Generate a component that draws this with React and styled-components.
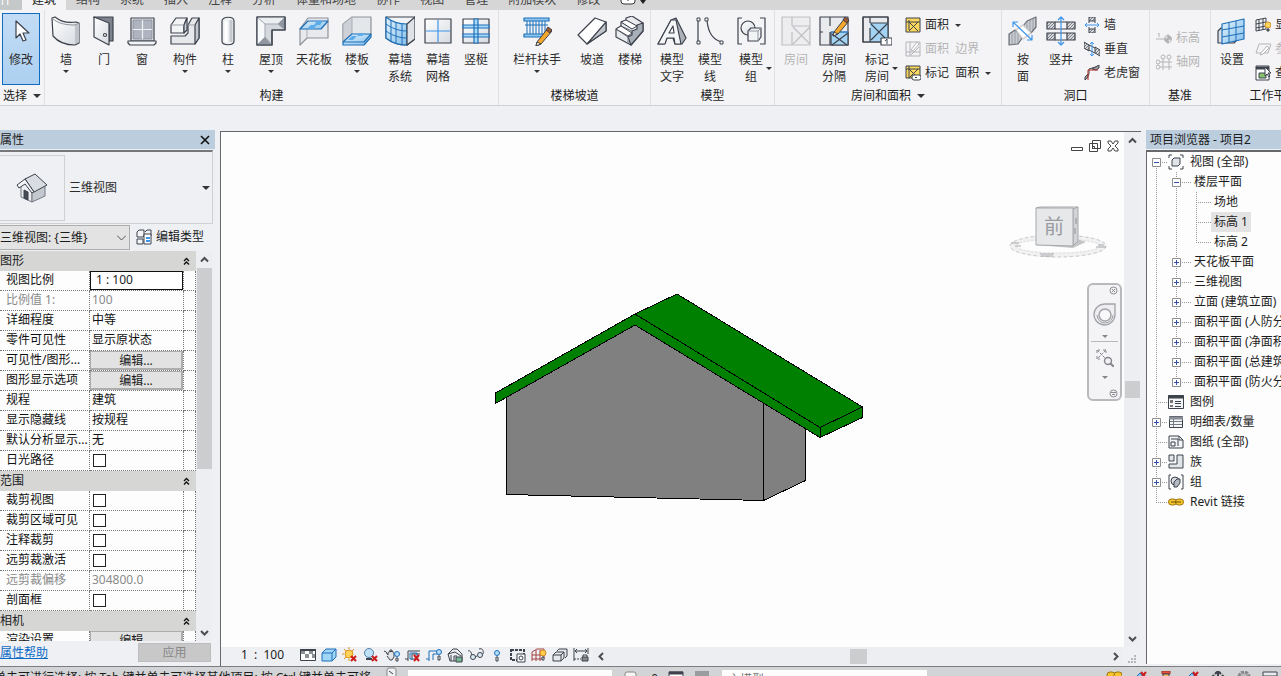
import React from "react";
import styled, { createGlobalStyle, css } from "styled-components";

const ink = "#3d424c";
const blue = "#1d6fb8";
const sky = "#3d95ea";

const GlobalStyle = createGlobalStyle`
  *, *::before, *::after { box-sizing: border-box; }
  body { margin: 0; overflow: hidden; }
  body, button, input, select, table {
    font-family: "Noto Sans", "Noto Sans CJK SC", sans-serif;
    font-size: 12px;
    line-height: 16px;
    color: #1c1c1c;
  }
  button, input, select { padding: 0; margin: 0; border: 0; background: none; }
  svg { display: block; flex: none; }
`;

/* ---------- shell ---------- */

const Shell = styled.div`
  display: flex;
  flex-direction: column;
  height: 100vh;
  overflow: hidden;
  background: #eef0f4;
`;

const TabBar = styled.nav`
  display: flex;
  align-items: flex-end;
  flex: none;
  height: 10px;
  overflow: hidden;
  background: #d6d6d6;
`;

const Tab = styled.button`
  flex: none;
  height: 18px;
  padding: 0 10px 2px;
  white-space: nowrap;
  color: #444;
  ${(p) => p.$file && css`padding-left: 0; width: 22px; direction: rtl; background: #c4c8c8; color: #fff;`}
  ${(p) => p.$active && css`background: #f4f4f6; color: #222;`}
`;

const Ribbon = styled.div`
  display: flex;
  flex: none;
  height: 96px;
  overflow: hidden;
  background: #f4f4f7;
  border-bottom: 1px solid #d0d0d2;
`;

const RibbonGroup = styled.section`
  display: flex;
  flex-direction: column;
  flex: none;
  width: ${(p) => p.$width}px;
  border-right: 1px solid #dfe0e0;
`;

const GroupTools = styled.div`
  display: flex;
  height: 77px;
  padding: 3px 2px 0;
`;

const GroupTitle = styled.div`
  display: flex;
  align-items: center;
  justify-content: center;
  gap: 6px;
  height: 18px;
  white-space: nowrap;
`;

const Tool = styled.button`
  display: flex;
  flex-direction: column;
  align-items: center;
  flex: none;
  width: ${(p) => p.$width || 38}px;
  height: 72px;
  padding-top: 3px;
  line-height: 17px;
  white-space: nowrap;
  color: #2c2c2c;
  ${(p) => p.disabled && css`color: #b4b4b4;`}
  ${(p) => p.$active && css`
    padding-top: 2px;
    border: 1px solid #0f6cc0;
    background: linear-gradient(#c3dcf5, #acd0f0);
  `}
`;

const ToolLabel = styled.span`
  display: grid;
  grid-template-columns: 1fr auto 1fr;
  align-items: center;
  width: 100%;
  margin-top: 5px;
  & > span { grid-column: 2; text-align: center; }
  & > i { margin-left: 3px; }
  & + i { margin-top: 2px; }
`;

const Caret = styled.i`
  width: 0;
  height: 0;
  border: ${(p) => (p.$big ? 4 : 3)}px solid transparent;
  border-top-color: #333;
  border-bottom-width: 0;
`;

const SmallColumn = styled.div`
  display: flex;
  flex-direction: column;
  flex: none;
  justify-content: ${(p) => (p.$center ? "center" : "flex-start")};
  padding-left: 4px;
`;

const SmallTool = styled.button`
  display: flex;
  align-items: center;
  gap: 4px;
  height: 24px;
  white-space: pre;
  color: ${(p) => (p.disabled ? "#b4b4b4" : "#2c2c2c")};
  & > i { margin-left: 2px; }
`;

const Workspace = styled.main`
  display: grid;
  grid-template-columns: 215px minmax(0, 1fr) 135px;
  column-gap: 5px;
  flex: 1;
  min-height: 0;
  margin-top: 24px;
`;

/* ---------- properties ---------- */

const Panel = styled.section`
  display: flex;
  flex-direction: column;
  min-width: 0;
  min-height: 0;
  overflow: hidden;
`;

const PanelTitle = styled.h2`
  display: flex;
  align-items: center;
  justify-content: space-between;
  flex: none;
  height: 19px;
  margin: 0 0 1px;
  padding: 0 5px 0 ${(p) => p.$inset || 0}px;
  font-size: 12px;
  font-weight: 400;
  white-space: nowrap;
  background: #bccddd;
`;

const TypeSelector = styled.button`
  display: flex;
  align-items: center;
  flex: none;
  height: 74px;
  margin-right: 2px;
  padding: 3px 2px 2px 0;
  border: solid #cfd0d2;
  border-width: 0 1px 1px 0;
  border-top: 2px solid #75777a;
  text-align: left;
  color: #2c2c2c;
`;

const Thumb = styled.span`
  display: flex;
  align-items: center;
  justify-content: center;
  width: 65px;
  height: 66px;
  margin-right: 4px;
  border: 1px solid #cfd0d2;
  border-left: 0;
`;

const Grow = styled.span`
  flex: 1;
`;

const InstanceRow = styled.div`
  display: flex;
  align-items: center;
  gap: 6px;
  flex: none;
  height: 27px;
`;

const SelectBox = styled.div`
  display: grid;
  align-items: center;
  & > * { grid-area: 1 / 1; }
  & > svg { justify-self: end; margin-right: 4px; pointer-events: none; }
`;

const InstanceSelect = styled.select`
  appearance: none;
  width: 130px;
  height: 25px;
  border: 1px solid #adadad;
  border-left: 0;
  border-radius: 0;
  background: #e3e3e3;
`;

const EditType = styled.button`
  display: flex;
  align-items: center;
  gap: 4px;
  padding-bottom: 2px;
  white-space: nowrap;
`;

const PropertyArea = styled.div`
  display: flex;
  flex: 1;
  min-height: 0;
  overflow: hidden;
`;

const PropertyTable = styled.table`
  align-self: flex-start;
  width: 196px;
  table-layout: fixed;
  border-collapse: separate;
  border-spacing: 0;
  background: #fdfdfd;
`;

const SectionHead = styled.th`
  height: 20px;
  padding: 0;
  font-weight: 400;
  text-align: left;
  background: #d6d7d5;
  & > div { display: flex; justify-content: space-between; padding-right: 6px; }
`;

const cell = css`
  height: 20px;
  padding: 0 0 1px;
  overflow: hidden;
  font-weight: 400;
  text-align: left;
  white-space: nowrap;
  border-right: 1px dotted #777;
  border-bottom: 1px dotted #777;
  color: ${(p) => (p.$dim ? "#8b8b8b" : "#111")};
`;

const NameCell = styled.th`
  ${cell}
  padding-left: 6px;
`;

const ValueCell = styled.td`
  ${cell}
  ${(p) => (p.$flush ? css`padding: 0;` : css`padding-left: 2px;`)}
  & > * { display: block; }
`;

const ScaleInput = styled.input`
  width: 100%;
  height: 19px;
  padding: 0 0 2px 5px;
  border: 1px solid #111;
  background: #fff;
`;

const EditButton = styled.button`
  width: 100%;
  height: 19px;
  padding-top: 1px;
  border: 1px solid #adadad;
  border-right-width: 2px;
  border-bottom-width: 2px;
  line-height: 15px;
  background: #e2e2e2;
`;

const CheckBox = styled.input`
  appearance: none;
  width: 13px;
  height: 13px;
  margin: 1px 0 0 1px;
  border: 1px solid #222;
  background: #fff;
`;

const PanelFooter = styled.footer`
  display: flex;
  align-items: flex-start;
  justify-content: space-between;
  flex: none;
  height: 25px;
  padding: 2px 4px 0 0;
`;

const HelpLink = styled.a`
  margin-top: 2px;
  line-height: 16px;
  color: #0b6bc7;
`;

const ApplyButton = styled.button`
  width: 73px;
  height: 19px;
  border: 1px solid #bdbdbd;
  background: #c8c8c9;
  color: #878787;
`;

/* ---------- scrollbars ---------- */

const Scroll = styled.div`
  display: flex;
  flex-direction: ${(p) => (p.$across ? "row" : "column")};
  align-items: center;
  background: #eceef2;
  ${(p) => (p.$across ? css`flex: 1; height: 18px;` : css`flex: none; width: 16px;`)}
`;

const ScrollArrow = styled.button`
  display: flex;
  align-items: center;
  justify-content: center;
  flex: none;
  width: 16px;
  height: 17px;
`;

const ScrollThumb = styled.span`
  flex: none;
  width: ${(p) => (p.$across ? p.$size : 15)}px;
  height: ${(p) => (p.$across ? 15 : p.$size)}px;
  background: #cccdce;
`;

const Space = styled.span`
  flex: ${(p) => p.$share} 1 0;
`;

/* ---------- drawing view ---------- */

const ViewPane = styled.section`
  display: flex;
  flex-direction: column;
  min-width: 0;
  min-height: 0;
  margin-top: 1px;
  border: solid #66686c;
  border-width: 1px 0 0 1px;
`;

const ViewBody = styled.div`
  display: flex;
  flex: 1;
  min-height: 0;
  padding-right: 1px;
`;

const Canvas = styled.div`
  position: relative;
  flex: 1;
  overflow: hidden;
  background: #fdfdfd;
`;

const ModelDrawing = styled.svg`
  position: absolute;
  left: 273px;
  top: 160px;
`;

const ViewCube = styled.svg`
  position: absolute;
  right: 15px;
  top: 72px;
`;

const WindowButtons = styled.div`
  position: absolute;
  right: 5px;
  top: 8px;
  display: flex;
  gap: 6px;
`;

const NavBar = styled.div`
  position: absolute;
  right: 2px;
  top: 151px;
  display: flex;
  flex-direction: column;
  align-items: center;
  width: 35px;
  height: 118px;
  padding: 1px 2px;
  border: 2px solid #b9b9bd;
  border-radius: 6px;
  background: #f4f4f6;
  & > button:first-child, & > button:last-child { align-self: flex-end; }
`;

const NavButton = styled.button`
  display: flex;
  flex-direction: column;
  align-items: center;
  justify-content: space-between;
  height: ${(p) => p.$height}px;
  & > i { border-top-color: #85858a; }
`;

const NavRule = styled.hr`
  width: 27px;
  margin: 3px 0 7px;
  border: 0;
  border-top: 1px solid #b9b9bd;
`;

const ViewControls = styled.div`
  display: flex;
  align-items: flex-start;
  flex: none;
  height: 19px;
`;

const ScaleButton = styled.button`
  width: 79px;
  padding-left: 4px;
  white-space: pre;
`;

const ControlIcons = styled.div`
  display: flex;
  gap: 5px;
  margin-right: 4px;
`;

const IconButton = styled.button`
  display: block;
`;

/* ---------- project browser ---------- */

const Tree = styled.ul`
  flex: 1;
  min-height: 0;
  margin: 0 0 2px;
  padding: 0 0 0 1px;
  overflow: hidden;
  list-style: none;
  border: solid #66686c;
  border-width: 2px 0 0 1px;
  background: #fdfdfd;
`;

const TreeRow = styled.li`
  display: flex;
  align-items: center;
  height: 20px;
  white-space: nowrap;
`;

const dots = (dir) => `repeating-linear-gradient(${dir}, #999 0 1px, transparent 1px 2px)`;

const Guide = styled.span`
  display: flex;
  align-items: center;
  flex: none;
  width: ${(p) => (p.$wide ? 23 : 20)}px;
  height: 20px;
  padding-left: 4px;
  background-repeat: no-repeat;
  background-image: ${dots("to bottom")}, ${dots("to right")};
  background-position: 8px ${(p) => (p.$line === "start" ? 10 : 0)}px, 8px 10px;
  background-size:
    1px ${(p) => (p.$line === "end" || p.$line === "start" ? 10 : 20)}px,
    ${(p) => (p.$branch ? 20 : 0)}px 1px;
`;

const Toggle = styled.button`
  display: block;
  width: 9px;
  height: 9px;
  background: #fff;
`;

const TreeLabel = styled.span`
  padding: 2px 3px;
  background: ${(p) => (p.$selected ? "#e3e3e3" : "none")};
  ${(p) => p.$iconic && css`margin-left: 3px;`}
`;

/* ---------- status ---------- */

const StatusBar = styled.footer`
  display: flex;
  align-items: flex-start;
  flex: none;
  height: 10px;
  overflow: hidden;
  border-top: 1px solid #7b7d80;
  background: #d3d4d6;
`;

const StatusText = styled.span`
  flex: none;
  width: 386px;
  margin-top: 3px;
  overflow: hidden;
  white-space: nowrap;
  text-indent: -6px;
`;

const StatusField = styled.input`
  flex: none;
  width: 204px;
  height: 20px;
  margin: 3px 10px 0 6px;
  background: #fdfdfd;
`;

const StatusSelect = styled.select`
  appearance: none;
  flex: none;
  width: 205px;
  height: 20px;
  margin: 3px 0 0 9px;
  padding-left: 6px;
  border-radius: 0;
  background: #fdfdfd;
  color: #777;
`;

const StatusIcons = styled.div`
  display: flex;
  gap: 10px;
  margin: 4px 3px 0 0;
`;

/* ---------- icons ---------- */

const Defs = () => (
  <svg width="0" height="0" style={{ position: "absolute" }} aria-hidden="true">
    <defs>
      <linearGradient id="steel" x1="0" y1="0" x2="1" y2="1">
        <stop offset="0" stopColor="#ffffff" />
        <stop offset="1" stopColor="#d6dae0" />
      </linearGradient>
      <linearGradient id="glass" x1="0" y1="0" x2="1" y2="1">
        <stop offset="0" stopColor="#e4f3ff" />
        <stop offset="1" stopColor="#84bfea" />
      </linearGradient>
      <pattern id="hatch" width="3" height="3" patternUnits="userSpaceOnUse">
        <rect width="3" height="3" fill="#d8dadd" />
        <path d="M0 3 3 0" stroke="#7b8088" strokeWidth="1" />
      </pattern>
      <pattern id="stripe" width="3" height="3" patternUnits="userSpaceOnUse">
        <rect width="3" height="3" fill="#c9ccd1" />
        <path d="M1 0v3" stroke="#9a9ea6" strokeWidth="1" />
      </pattern>
    </defs>
  </svg>
);

const Big = ({ children }) => (
  <svg width="30" height="30" viewBox="0 0 30 30" fill="none" stroke={ink} strokeWidth="1.2" strokeLinejoin="round">
    {children}
  </svg>
);

const Small = ({ children, size = 16 }) => (
  <svg width={size} height={size} viewBox="0 0 16 16" fill="none" stroke={ink} strokeWidth="1">
    {children}
  </svg>
);

const Pencil = () => (
  <g strokeWidth="1">
    <path d="M15 16 26 2 30 5 19 18 14 20Z" fill="#f5a72c" />
    <path d="M15 16 19 18 14 20Z" fill="#fff2cf" />
    <path d="m24 4 2-3 4 3-2 3Z" fill="#a4592b" />
  </g>
);

const art = {
  modify: <path d="M10 5v17l4-4 3 7 3-1-3-7h6Z" fill="#fff" />,
  wall: <><path d="m1 2 3-1c6 5 14 6 21 5l3 1v20l-4 2c-9 0-17-3-22-9Z" fill="url(#steel)" /><path d="M24 9v19l4-2V7Z" fill="#c0c4ca" stroke="none" /><path d="M1 2c6 6 15 7 23 7l4-2" stroke="#8b9099" strokeWidth="1" /></>,
  door: <><path d="M5 1h19v24h-4V8L5 2Z" fill="#7d838c" /><path d="m5 1 15 6v22L5 21Z" fill="url(#steel)" /><circle cx="16" cy="19" r="1.500" fill="#fff" /></>,
  window: <><path d="M4 2h23v23H4Z" fill="#eceef1" /><path d="M6 4h19v19H6Z" fill="#aeb3bf" stroke="#8b909c" strokeWidth="1" /><path d="M15.500 4v19M6 13.500h19" stroke="#f1f2f5" /><path d="M1 25h28v2l-2 2H3l-2-2Z" fill="#f4f5f7" /></>,
  component: <><path d="m1 9 5-7h11l-3 7v8H1Z" fill="#f3f4f6" /><path d="M14 9v8l3-3V2Z" fill="#cfd3d9" /><path d="M1 9h13" stroke="#9a9fa8" strokeWidth="1" /><path d="m18 9 4-7h7v20l-4 6H1v-8h14l3-3Z" fill="#e6e8ec" /><path d="m25 9 4-7v20l-4 6Z" fill="#c3c8cf" /><path d="M18 9h7" stroke="#9a9fa8" strokeWidth="1" /></>,
  column: <><path d="M9 5c0-5 12-5 12 0v20c0 5-12 5-12 0Z" fill="#eef0f2" /><path d="M13 5v21" stroke="#fff" strokeWidth="3" /><path d="M18 4v22" stroke="#c4c8ce" strokeWidth="3" /></>,
  roof: <><path d="M1 1h28v13H16v15H1Z" fill="#d5d8dd" /><path d="m1 1 8 7v13l-8 8Z" fill="#f7f8fa" stroke="none" /><path d="m1 29 8-8 7 8ZM29 1l-7 7 7 6Z" fill="#8f96a1" stroke="none" /><path d="M1 1h28l-7 7H9Z" fill="#eceef1" stroke="none" /><path d="m1 1 8 7h13l7-7M9 8v13l-8 8M9 21l7 8M22 8l7 6" stroke="#a2a7af" strokeWidth="1" /><path d="M1 1h28v13H16v15H1Z" /></>,
  ceiling: <><path d="M1 13 9 2h20v20H8l-7 7Z" fill="#e7e9ed" stroke="#8d9299" /><path d="M8 13v9" stroke="#b2b6bd" /><path d="m1 13 8-8h20l-7 8Z" fill="url(#glass)" stroke={blue} /><path d="M8 13l4-4h6l-4 4ZM15 9l3-4h6l-3 4Z" fill="#5cabe9" stroke="none" /></>,
  floor: <><path d="M1 8 10 1h19v17l-7 8H1Z" fill="#e4e7ea" stroke="#8d9299" /><path d="M1 8 10 1v17l-9 7Z" fill="#cdd1d6" stroke="#a9adb4" strokeWidth="1" /><path d="m1 26 9-8h19v3l-7 8H1Z" fill="url(#glass)" stroke={blue} /><path d="M1 26h21l7-8" stroke={blue} /><path d="m6 24 4-4h5l-4 4ZM15 20l3-3h5l-3 3Z" fill="#5cabe9" stroke="none" /></>,
  curtain: <><path d="M1 1h29v22l-8 6C14 29 7 27 1 22Z" fill="#f1f4f7" /><path d="M1 1c6 5 14 7 21 7v21C14 29 7 27 1 22Z" fill="url(#glass)" stroke={blue} /><path d="m22 8 8-7v22l-8 6Z" fill="#dfe2e6" /><path d="M1 8c7 5 14 7 21 7M1 15c7 5 14 7 21 7M6 4v21M11 6v21M17 8v20" stroke={blue} strokeWidth="1" /></>,
  grid: <><path d="M2 3h26v24H2Z" fill="url(#steel)" /><path d="M15 4v22M3 15h24" stroke={sky} /></>,
  mullion: <><path d="M2 3h26v24H2Z" fill="url(#steel)" /><path d="M2 9h26v3H2ZM2 18h26v3H2ZM13 3h4v24h-4Z" fill="#a8dafa" stroke={blue} /></>,
  railing: <><path d="M2 2h25v3H2ZM2 18h22v3H2Z" fill="#8cc6f2" stroke={blue} /><path d="M5 5v13M8 5v13M11 5v13M14 5v13M17 5v13M20 5v13M23 5v13M3 9h23" stroke={blue} strokeWidth="1" /><g transform="translate(0 10)"><Pencil /></g></>,
  ramp: <><path d="m1 19 17-17 11 4v9L10 28Z" fill="#fff" /><path d="M29 6v9L10 28Z" fill="#c0c5cc" /></>,
  stair: <><path d="m1 13 5-3V6l5-2V2l6-2 11 7v8L16 29 1 21Z" fill="#e9ebee" /><path d="m16 29-3-8 4-2v-4l5-2v-4l6-2v8Z" fill="#a9afb9" /><path d="m1 13 12 8v6M6 10l11 5M6 6l11 7M11 4l11 7M1 13l5-3" strokeWidth="1" stroke="#747a84" /><path d="m1 13 5-3 11 7-4 3ZM6 6l5-2 11 6-5 3Z" fill="#fff" strokeWidth="1" /></>,
  mtext: <><path d="m1 28 13-24 5-2 10 20-4 6h-7l-2-6h-6l-3 6Z" fill="#adb2ba" /><path d="m1 28 13-24h5l5 24h-6l-1-6h-7l-2 6Z" fill="#f4f5f6" /><path d="M12 17h5l-1-7Z" fill="#fff" /></>,
  mline: <><path d="M3 4v22M12 4c1 13 6 20 15 22" /><path d="M2 2h3v3H2ZM2 25h3v3H2ZM10 2h3v3h-3ZM25 25h3v3h-3Z" fill="#fff" strokeWidth="1" /></>,
  mgroup: <><path d="M6 2H2v26h4M24 2h5v26h-5" /><circle cx="12" cy="12" r="7" fill="url(#steel)" /><path d="m12 15 3-3h10v9l-3 4H12Z" fill="#f2f3f5" /><path d="M12 15h10v10M22 15l3-3" stroke="#9297a0" strokeWidth="1" /></>,
  room: <g stroke="#bfc0c3"><path d="M1 1h28v28H1Z" fill="#ededf0" /><path d="M11 1v9M11 16v13M11 10h18M12 11l17 17M29 11 12 28" /></g>,
  separator: <><path d="M1 1h28v28H1Z" fill="#e8eaed" /><path d="M12 16h17v13H12Z" fill="#a4d4f3" /><path d="M11 1v9M11 16v13M1 16h3M13 29l16-12M13 18l15 11" /><path d="M12 16h17" stroke={sky} /><Pencil /></>,
  tagroom: <><path d="M1 1h25v25H1Z" fill="#e8eaed" /><path d="M8 7h18v18H8Z" fill="#a4d4f3" stroke="none" /><path d="M8 1v6M8 12v14M8 7h18M9 8l16 16M25 8 9 24M1 1h25v25H1Z" /><path d="M19 22h11v7H19Z" fill="#fff" /><path d="M25 23v5M23 25l2-2" strokeWidth="1" /></>,
  byface: <><path d="M19 5 28 1v10l-5 6-8-7ZM1 29V18l6-4 8 7-5 7Z" fill="url(#stripe)" stroke="#6c7179" /><path d="m8 14 7-5 8 8-8 6Z" fill="#fff" stroke="#ccc" /><path d="m5 6 19 18M5 11V6h5M24 19v5h-5" stroke={sky} /></>,
  shaft: <><path d="M1 6h8v7H1ZM21 6h8v7h-8ZM1 17h8v7H1ZM21 17h8v7h-8Z" fill="url(#hatch)" /><path d="M9 6h12M9 13h12M9 17h12M9 24h12" strokeWidth="1" /><path d="M15 1v28M12 4l3-3 3 3M12 26l3 3 3-3" stroke={sky} /></>,
  setplane: <><path d="M1 15 4 12h14c4 0 4 3 4 6v4l-5 5H1Z" fill="#dce1e6" /><path d="m5 8 22-5v20L5 28Z" fill="url(#glass)" stroke={blue} /><path d="M12 6v20M19 5v20M5 14l22-4M5 21l22-4" stroke={blue} strokeWidth="1" /></>,
};

const smallArt = {
  area: <><path d="M1 1h14v14H1Z" fill="#fbd85d" /><path d="M4 3v10M1 5h14M4 5l9 9M13 5l-9 9" /></>,
  boundary: <g stroke="#b5b5b8"><path d="M1 1h14v14H1ZM5 1v14M1 11h14M6 14l8-8" /><path d="m6 9 6-8 2 2-6 7Z" fill="#fff" /></g>,
  tagarea: <><path d="M1 1h14v12H1Z" fill="#fbd85d" /><path d="M4 1v12M1 4h14M4 4l9 9M13 4l-9 9" /><rect x="7" y="10" width="9" height="5" rx="2" fill="#fff" /><path d="M10 12.500h2" /></>,
  owall: <><path d="M5 0h6v4H5ZM5 12h6v4H5Z" fill="url(#hatch)" /><path d="M5 4v2M11 4v2M5 12v-2M11 12v-2" /><path d="M1 8h14M3 6 1 8l2 2M13 6l2 2-2 2" stroke={sky} /></>,
  vertical: <><path d="m0 1 5 3v6L0 7ZM11 6l5 3v6l-5-3Z" fill="url(#hatch)" /><path d="m5 4 6 3M5 9l6 3" /><path d="M8 1v14M6 3l2-2 2 2M6 13l2 2 2-2" stroke={sky} /></>,
  dormer: <><path d="m1 15 4-6V4l10-3" /><path d="m8 4 7-4v3l-3 2ZM1 15v-3l3-3v3Z" fill="#9ba0a7" /><path d="M4 15V5h10" stroke="#b42a25" /></>,
  level: <g stroke="#b5b5b8"><path d="M0 9h8M3 3v4M2 4l1-1" /><circle cx="12" cy="9" r="3.500" fill="#eee" /><path d="M12 4v10M8 9h8" /><path d="M12 9V6a3 3 0 0 1 3 3ZM12 9v3a3 3 0 0 1-3-3Z" fill="#aaa" /></g>,
  axis: <g stroke="#b5b5b8"><circle cx="7" cy="3" r="2" /><circle cx="13" cy="3" r="2" /><circle cx="2" cy="8" r="2" /><circle cx="2" cy="13" r="2" /><path d="M7 5v11M13 5v11M4 8h12M4 13h12" /></g>,
  show: <><path d="m1 3 10-2v11L1 14ZM4 3v11M8 2v11M1 7l10-2M1 11l10-2" /><circle cx="13" cy="8" r="3" fill="#ffd65b" stroke="#d89428" /><path d="M12 12h2v2h-2Z" fill="#777" /></>,
  ref: <g stroke="#b5b5b8"><path d="M1 12 4 3h12l-3 9Z" /><path d="m6 12 6-7 2 2-6 6-3 1Z" fill="#fff" /></g>,
  viewer: <><path d="M1 1h13v14H1Z" fill="#fff" /><path d="M1 3h13" strokeWidth="3" /><path d="M4 8h7v5H4Z" fill="#87c26e" /><path d="M10 2v9l2-2 2 3 1-1-2-3h3Z" fill="#fff" /></>,
  edittype: <><path d="M1 3 3 1h5v6L7 8H1ZM9 3l2-2h4v6M1 10h6v5H1Z" fill="#f2f4f6" /><path d="M8 5h7v10H8Z" fill="#fff" /><path d="M10 9h4M10 12h4" stroke={sky} strokeWidth="2" /></>,
  detail: <><path d="M0.500 2.500h15v11h-15Z" fill="#fff" /><path d="M1 4h4v3H1ZM9 4h4v3H9ZM5 7h4v4H5ZM12 7h3v4h-3Z" fill="#8b9096" stroke="none" /><path d="M0 3h16" strokeWidth="2" /></>,
  cube: <><path d="m1 6 4-4h10v8l-4 4H1Z" fill="#9fd5f6" stroke={blue} /><path d="M1 6h10v8M11 6l4-4" stroke={blue} /></>,
  sun: <><circle cx="7" cy="7" r="4" fill="#ffd35a" stroke="#dc9420" /><path d="M7 0v2M7 12v2M0 7h2M2 2l2 2M12 2l-2 2M2 12l2-2" stroke="#dc9420" /><path d="m9 9 5 5M14 9l-5 5" stroke="#cc1b1b" strokeWidth="2" /></>,
  shadow: <><circle cx="6" cy="6" r="4.500" fill="#bfe2f8" stroke="#517ea5" /><path d="M3 12h6" strokeWidth="2" /><path d="m9 9 5 5M14 9l-5 5" stroke="#cc1b1b" strokeWidth="2" /></>,
  teapot: <><path d="M0 4c3 0 3 4 4 4V6c0-2 6-2 6 0v4l-2 3H6L3 9" fill="#e2e5e8" /><path d="M5 4h4M7 2v2" /><circle cx="13" cy="7" r="2.500" fill="#b5dffa" stroke={blue} /><path d="M12 11h2v3h-2Z" /></>,
  crop: <><path d="M0 12h3M3 4v10M3 4h12M7 13V7h8" /><path d="M5 6h7v6H5Z" stroke={blue} /><path d="m9 8 5 6M14 8l-5 6" stroke="#cc1b1b" strokeWidth="2" /></>,
  cropshow: <><path d="M0 12h3M3 4v10M3 4h8M7 13V7h5" stroke={blue} /><circle cx="13" cy="5" r="2.500" fill="#b5dffa" stroke={blue} /><path d="M12 9h2v4h-2Z" /></>,
  lock3d: <><path d="M1 7 6 2h4l5 5v7H3Z" fill="#eceef0" /><path d="m1 7 7-2 6 4M4 8v6M7 14V9h3" /><path d="M9 10h6v5H9Z" fill="#76b795" /></>,
  glasses: <><path d="M0 4c2-1 3 1 4 4M11 2c3-1 5 1 4 5M7 10l2-1" /><circle cx="5" cy="10" r="2.500" fill="#dcecf5" /><circle cx="12" cy="8" r="2.500" fill="#dcecf5" /></>,
  bulb: <><circle cx="8" cy="6" r="2.500" fill="#b5dffa" stroke={blue} /><path d="M7 10h2v4H7Z" /></>,
  temp: <><path d="M1 3h13v10H1Z" strokeWidth="2" strokeDasharray="3 1" /><path d="M7 7h8v8H7Z" fill="#fff" /><circle cx="11" cy="11" r="2" /></>,
  analytic: <><path d="m1 5 5-3h7v9M1 5v9M5 3v11M9 3v11M1 8h11M1 12h10" stroke="#a34242" /><circle cx="12" cy="6" r="3" fill="#ffcc4c" stroke="#d88a1d" /><path d="M11 10h2v3h-2Z" /></>,
  displace: <><path d="m5 4 2-2h8v7l-2 2M1 8l3-3h8v6l-3 3H1Z" fill="#e6e8ea" /><path d="M1 8h8v6M9 8l3-3" /></>,
  reveal: <><path d="M1 1v13M15 1v6M2 4h12M4 2 2 4l2 2M12 2l2 2-2 2" /><path d="M1 12h7" strokeDasharray="2 1" /><path d="M9 10h6v4H9Z" fill="#888" /><path d="M10 10V8h4v2" /></>,
  views: <><path d="M4 1H1v3M12 1h3v3M1 12v3h3M15 12v3h-3" /><path d="m4 6 2-2h6v6l-2 2H4Z" fill="#e1e4e8" /></>,
  legend: <><path d="M0.500 1.500h15v13h-15Z" fill="#f4f5f6" /><path d="M0 3h16" strokeWidth="3" /><path d="M2 6h3v3H2ZM2 11h3v2H2Z" fill="#777" strokeWidth="0" /><path d="M7 7.500h6M7 9.500h6M7 12.500h6" /></>,
  schedule: <><path d="M1.500 2.500h13v11h-13Z" fill="#f4f5f6" /><path d="M1 4h14" strokeWidth="3" stroke="#8a8f97" /><path d="M5.500 5v8M2 7.500h12M2 10.500h12" stroke="#757b85" /></>,
  sheet: <><path d="M1 2h10l4 4v8H1Z" fill="#f4f5f6" /><path d="M3 5h7v7M3 8h4v4H3ZM11 2v4h4" /></>,
  family: <><path d="M9 1h6v13H1v-4h8Z" fill="#e3e6e9" /><path d="M1 1h5v6H1Z" fill="#e3e6e9" /></>,
  group: <><path d="M3 1H1v14h2M13 1h2v14h-2" /><circle cx="7" cy="7" r="4" fill="#d7dce1" /><path d="m6 8 3-3h3v4l-3 4H6Z" fill="#b3bac2" /></>,
  link: <g stroke="#9d720b" fill="#f6c52e" strokeWidth="1"><rect x="0.500" y="5" width="8" height="6" rx="3" /><rect x="7.500" y="5" width="8" height="6" rx="3" /><path d="M3 8h3M10 8h3M6 8h4" stroke="#6d4c04" /></g>,
  statusfilter: <><rect x="1" y="1" width="9" height="13" rx="2" fill="#eef0f2" stroke="#888" /><path d="m3 4 4 3" /></>,
  statusdoc: <rect x="3" y="1" width="11" height="14" rx="2" fill="#f5f5f5" stroke="#888" />,
  statuswin: <><path d="M1 1h14v13H1Z" fill="#fff" /><path d="M1 2h14" strokeWidth="3" /></>,
  statusgray: <path d="M1 0h14v15H1Z" fill="#9b9c9f" stroke="none" />,
  sellink: <g stroke="#9d720b" fill="#f6c52e"><rect x="1" y="1" width="8" height="7" rx="3" /><rect x="8" y="1" width="8" height="7" rx="3" /></g>,
  selunder: <><path d="m1 9 7-7 3 3-5 7Z" fill="#83c4ee" stroke={blue} /><path d="m9 1 5 6M14 1 9 7" stroke="#cc1b1b" strokeWidth="2" /></>,
  selpin: <><path d="M4 0h8v3H4Z" fill="#e84f3c" stroke="#99372c" /><path d="M5 3h6v8H5Z" fill="#f5c064" /></>,
  drag: <path d="M8 0v13M2 6h12M5 3l3-3 3 3M4 4 2 6l2 2M12 4l2 2-2 2" strokeWidth="2" />,
  gear: <circle cx="8" cy="6" r="5" fill="#bbb" stroke="#88898c" strokeWidth="3" strokeDasharray="3 1" />,
  funnel: <path d="M1 1h14v4H1Z" fill="#e7eaee" />,
};

const SmallIcon = ({ name }) => <Small>{smallArt[name]}</Small>;

const Chevron = ({ d }) => (
  <svg width="9" height="9" viewBox="0 0 9 9" fill="none" stroke="#4c4d50" strokeWidth="2"><path d={d} /></svg>
);
const chevrons = { up: "M1 6.500 4.500 3 8 6.500", down: "M1 3 4.500 6.500 8 3", left: "M6 1 2.500 4.500 6 8", right: "M3 1 6.500 4.500 3 8" };

const Fold = () => (
  <svg width="7" height="8" viewBox="0 0 7 8" fill="none" stroke="#111" strokeWidth="1.400"><path d="m1 4 2.500-2.500L6 4M1 7.500 3.500 5 6 7.500" /></svg>
);

/* ---------- ribbon data ---------- */

const tabs = ["文件", "建筑", "结构", "系统", "插入", "注释", "分析", "体量和场地", "协作", "视图", "管理", "附加模块", "修改"];

const groups = [
  { title: "选择", width: 45, caret: true, tools: [{ icon: "modify", label: ["修改"], active: true }] },
  {
    title: "构建", width: 454, tools: [
      { icon: "wall", label: ["墙"], menu: "below" }, { icon: "door", label: ["门"] }, { icon: "window", label: ["窗"] },
      { icon: "component", label: ["构件"], menu: "below", width: 48 }, { icon: "column", label: ["柱"], menu: "below" },
      { icon: "roof", label: ["屋顶"], menu: "below", width: 48 }, { icon: "ceiling", label: ["天花板"] },
      { icon: "floor", label: ["楼板"], menu: "below", width: 48 }, { icon: "curtain", label: ["幕墙", "系统"] },
      { icon: "grid", label: ["幕墙", "网格"] }, { icon: "mullion", label: ["竖梃"] },
    ],
  },
  {
    title: "楼梯坡道", width: 152, tools: [
      { icon: "railing", label: ["栏杆扶手"], menu: "below", width: 72 }, { icon: "ramp", label: ["坡道"] }, { icon: "stair", label: ["楼梯"] },
    ],
  },
  {
    title: "模型", width: 124, tools: [
      { icon: "mtext", label: ["模型", "文字"] }, { icon: "mline", label: ["模型", "线"] }, { icon: "mgroup", label: ["模型", "组"], menu: "side", width: 44 },
    ],
  },
  {
    title: "房间和面积", width: 227, caret: true, tools: [
      { icon: "room", label: ["房间"], disabled: true }, { icon: "separator", label: ["房间", "分隔"] }, { icon: "tagroom", label: ["标记", "房间"], menu: "side", width: 48 },
    ],
    small: [{ icon: "area", label: "面积", menu: true }, { icon: "boundary", label: "面积  边界", disabled: true }, { icon: "tagarea", label: "标记  面积", menu: true }],
  },
  {
    title: "洞口", width: 148, tools: [{ icon: "byface", label: ["按", "面"] }, { icon: "shaft", label: ["竖井"] }],
    small: [{ icon: "owall", label: "墙" }, { icon: "vertical", label: "垂直" }, { icon: "dormer", label: "老虎窗" }],
  },
  {
    title: "基准", width: 61, tools: [], center: true,
    small: [{ icon: "level", label: "标高", disabled: true }, { icon: "axis", label: "轴网", disabled: true }],
  },
  {
    title: "工作平面", width: 126, tools: [{ icon: "setplane", label: ["设置"] }],
    small: [{ icon: "show", label: "显示" }, { icon: "ref", label: "参照 平面", disabled: true }, { icon: "viewer", label: "查看器" }],
  },
];

const RibbonTool = ({ tool }) => (
  <Tool type="button" $width={tool.width} $active={tool.active} disabled={tool.disabled}>
    <Big>{art[tool.icon]}</Big>
    <ToolLabel>
      <span>{tool.label.map((line, i) => <React.Fragment key={line}>{i > 0 && <br />}{line}</React.Fragment>)}</span>
      {tool.menu === "side" && <Caret />}
    </ToolLabel>
    {tool.menu === "below" && <Caret />}
  </Tool>
);

/* ---------- property data ---------- */

const properties = [
  {
    title: "图形", rows: [
      ["视图比例", "scale", "1 : 100"], ["比例值 1:", "text", "100", true], ["详细程度", "text", "中等"],
      ["零件可见性", "text", "显示原状态"], ["可见性/图形...", "edit"], ["图形显示选项", "edit"], ["规程", "text", "建筑"],
      ["显示隐藏线", "text", "按规程"], ["默认分析显示...", "text", "无"], ["日光路径", "check"],
    ],
  },
  {
    title: "范围", rows: [
      ["裁剪视图", "check"], ["裁剪区域可见", "check"], ["注释裁剪", "check"], ["远剪裁激活", "check"],
      ["远剪裁偏移", "text", "304800.0", true], ["剖面框", "check"],
    ],
  },
  { title: "相机", rows: [["渲染设置", "edit"]] },
];

const PropertyValue = ({ name, kind, value }) => {
  if (kind === "scale") return <ScaleInput aria-label={name} defaultValue={value} />;
  if (kind === "edit") return <EditButton type="button" aria-label={`${name} 编辑`}>编辑...</EditButton>;
  if (kind === "check") return <CheckBox type="checkbox" aria-label={name} />;
  return <span>{value}</span>;
};

const PropertiesPanel = () => (
  <Panel>
    <PanelTitle>
      属性
      <IconButton type="button" aria-label="关闭">
        <svg width="10" height="10" viewBox="0 0 10 10" stroke="#111" strokeWidth="1.600"><path d="m1 1 8 8M9 1 1 9" /></svg>
      </IconButton>
    </PanelTitle>
    <TypeSelector type="button">
      <Thumb>
        <svg width="32" height="32" viewBox="0 0 32 32" stroke={ink} strokeLinejoin="round">
          <path d="m5 13 5-7 6 11v13L5 25Z" fill="#eceef1" stroke="#737984" />
          <path d="m16 17 13-5v12l-13 6Z" fill="#c3c8cf" stroke="#737984" />
          <path d="m8 18 4 2v8l-4-2Z" fill="#464b54" />
          <path d="m9 7 10-5 12 11-13 7Z" fill="#d9dce1" />
          <path d="m1 13 8-6 9 13-2 1-7-9-6 4Z" fill="#f3f4f6" />
        </svg>
      </Thumb>
      三维视图
      <Grow />
      <Caret $big />
    </TypeSelector>
    <InstanceRow>
      <SelectBox>
        <InstanceSelect aria-label="视图实例"><option>三维视图: {"{三维}"}</option></InstanceSelect>
        <svg width="9" height="9" viewBox="0 0 9 9" fill="none" stroke="#555"><path d="M0 2.500 4.500 7 9 2.500" /></svg>
      </SelectBox>
      <EditType type="button"><SmallIcon name="edittype" />编辑类型</EditType>
    </InstanceRow>
    <PropertyArea>
      <PropertyTable>
        <colgroup><col width="90" /><col width="94" /><col width="12" /></colgroup>
        {properties.map((section) => (
          <tbody key={section.title}>
            <tr>
              <SectionHead colSpan={3}>
                <div>{section.title}<IconButton type="button" aria-label={`折叠${section.title}`}><Fold /></IconButton></div>
              </SectionHead>
            </tr>
            {section.rows.map(([name, kind, value, dim]) => (
              <tr key={name}>
                <NameCell scope="row" $dim={dim}>{name}</NameCell>
                <ValueCell $dim={dim} $flush={kind === "scale" || kind === "edit"}>
                  <PropertyValue name={name} kind={kind} value={value} />
                </ValueCell>
                <ValueCell />
              </tr>
            ))}
          </tbody>
        ))}
      </PropertyTable>
      <Scroll>
        <ScrollArrow type="button" aria-label="向上滚动"><Chevron d={chevrons.up} /></ScrollArrow>
        <ScrollThumb $size={201} />
        <Space $share={1} />
        <ScrollArrow type="button" aria-label="向下滚动"><Chevron d={chevrons.down} /></ScrollArrow>
      </Scroll>
    </PropertyArea>
    <PanelFooter>
      <HelpLink href="#help">属性帮助</HelpLink>
      <ApplyButton type="button" disabled>应用</ApplyButton>
    </PanelFooter>
  </Panel>
);

/* ---------- view ---------- */

const House = () => (
  <ModelDrawing width="370" height="210" viewBox="494 292 370 210" stroke="#000" strokeLinejoin="round" shapeRendering="crispEdges">
    <path d="M506.500 397 635 325l128.500 75v100.500l-257-6Z" fill="#808080" />
    <path d="M763.500 400 805.500 425v55.500l-42 20Z" fill="#808080" />
    <path d="m635 314 42-20 185.500 113-42.500 20.500Z" fill="#008000" />
    <path d="m495.500 393 139.500-79 185 113.500v10L635 325l-139.500 78.500Z" fill="#008000" />
    <path d="m820 427.500 42.500-20.500v10.500L820 437.500Z" fill="#008000" />
  </ModelDrawing>
);

const Cube = () => (
  <ViewCube width="102" height="56" viewBox="1007 204 102 56" fill="none" stroke="#a6a8ac">
    <ellipse cx="1058" cy="246" rx="46" ry="9" stroke="#f1f1f2" strokeWidth="5" />
    <ellipse cx="1058" cy="246" rx="48" ry="11" stroke="#c6c7ca" strokeDasharray="3 3" />
    <ellipse cx="1058" cy="246" rx="42" ry="7" stroke="#dadadc" strokeDasharray="2 2" />
    <path d="M1011 243h8M1015 246h6M1040 254h14M1041 256h12M1096 247h10M1098 245h6" />
    <path d="m1036 245 37 3 13-6-12-4Z" fill="#c4c5c7" stroke="none" />
    <path d="m1036 208 4-1h38l-5 2Z" fill="#f3f3f4" />
    <path d="m1073 209 5-2v34l-5 5Z" fill="#d2d3d6" />
    <path d="M1036 208h37v38l-37-1Z" fill="#e6e8ea" />
    <path d="M1076 218v6M1075 228v6" strokeWidth="1.500" />
    <text x="1044" y="234" fontSize="20" fill="#9a9ca1" stroke="none" fontFamily="'Noto Sans CJK SC', sans-serif">前</text>
  </ViewCube>
);

const viewIcons = [
  ["detail", "详细程度"], ["cube", "视觉样式"], ["sun", "日光路径"], ["shadow", "阴影"], ["teapot", "渲染"], ["crop", "裁剪视图"],
  ["cropshow", "显示裁剪区域"], ["lock3d", "锁定三维视图"], ["glasses", "临时隐藏"], ["bulb", "显示隐藏的图元"], ["temp", "临时视图属性"],
  ["analytic", "分析模型"], ["displace", "位移集"], ["reveal", "显示约束"],
];

const DrawingView = () => (
  <ViewPane>
    <ViewBody>
      <Canvas>
        <House />
        <Cube />
        <WindowButtons>
          <IconButton type="button" aria-label="最小化"><svg width="12" height="12" viewBox="0 0 12 12" fill="#fff" stroke="#444"><path d="M0.500 7.500h11v3H0.500Z" /></svg></IconButton>
          <IconButton type="button" aria-label="还原"><svg width="12" height="12" viewBox="0 0 12 12" fill="#fff" stroke="#444"><path d="M3.500 0.500h8v8h-8ZM0.500 3.500h8v8h-8ZM3.500 6.500h2v2h-2Z" /></svg></IconButton>
          <IconButton type="button" aria-label="关闭视图"><svg width="12" height="12" viewBox="0 0 12 12" fill="#fff" stroke="#444"><path d="M1 1h3l2 3 2-3h3v2L8 6l3 3v2H8L6 8l-2 3H1V9l3-3-3-3Z" /></svg></IconButton>
        </WindowButtons>
        <NavBar>
          <IconButton type="button" aria-label="关闭导航栏"><svg width="9" height="9" viewBox="0 0 9 9" fill="none" stroke="#8b8c90"><circle cx="4.500" cy="4.500" r="3.500" /><path d="m3 3 3 3M6 3 3 6" /></svg></IconButton>
          <NavButton type="button" $height={43} aria-label="控制盘">
            <svg width="24" height="34" viewBox="0 0 24 34" fill="#eeeef0" stroke="#a2a4a8">
              <path d="M12 9h10v11a10.500 10.500 0 1 1-10-11Z" strokeWidth="1.300" />
              <circle cx="12" cy="20" r="6" fill="#f8f8fa" strokeWidth="1.500" />
              <path d="M4 20a8 8 0 0 0 16 0" fill="none" />
            </svg>
            <Caret />
          </NavButton>
          <NavRule />
          <NavButton type="button" $height={30} aria-label="缩放">
            <svg width="18" height="18" viewBox="0 0 18 18" fill="none" stroke="#85878c"><path d="m1 1 9 9M10 1 1 10M1 4V1h3M7 1h3v3M1 7v3h3" strokeDasharray="3 1" /><circle cx="12" cy="12" r="3.500" fill="#f1f1f3" strokeWidth="1.400" /><path d="m14 14 4 4" strokeWidth="2" /></svg>
            <Caret />
          </NavButton>
          <Grow />
          <IconButton type="button" aria-label="导航选项"><svg width="9" height="9" viewBox="0 0 9 9" fill="none" stroke="#8b8c90"><circle cx="4.500" cy="4.500" r="3.500" /><path d="M2 3.500h5M3 5.500h3" /></svg></IconButton>
        </NavBar>
      </Canvas>
      <Scroll>
        <ScrollArrow type="button" aria-label="向上滚动"><Chevron d={chevrons.up} /></ScrollArrow>
        <Space $share={232} />
        <ScrollThumb $size={17} />
        <Space $share={232} />
        <ScrollArrow type="button" aria-label="向下滚动"><Chevron d={chevrons.down} /></ScrollArrow>
      </Scroll>
    </ViewBody>
    <ViewControls>
      <ScaleButton type="button">1  :  100</ScaleButton>
      <ControlIcons>
        {viewIcons.map(([icon, label]) => <IconButton type="button" key={icon} aria-label={label}><SmallIcon name={icon} /></IconButton>)}
      </ControlIcons>
      <Scroll $across>
        <ScrollArrow type="button" aria-label="向左滚动"><Chevron d={chevrons.left} /></ScrollArrow>
        <Space $share={1} />
        <ScrollThumb $across $size={17} />
        <Space $share={1} />
        <ScrollArrow type="button" aria-label="向右滚动"><Chevron d={chevrons.right} /></ScrollArrow>
      </Scroll>
      <svg width="18" height="17" viewBox="0 0 18 17" fill="#b5b6b9"><path d="M11 8h2v2h-2ZM8 11h2v2H8ZM11 11h2v2h-2ZM5 14h2v2H5ZM8 14h2v2H8ZM11 14h2v2h-2Z" /></svg>
    </ViewControls>
  </ViewPane>
);

/* ---------- browser ---------- */

const tree = [
  { level: 0, label: "视图 (全部)", icon: "views", toggle: "minus", line: "start" },
  { level: 1, label: "楼层平面", toggle: "minus" },
  { level: 2, label: "场地" },
  { level: 2, label: "标高 1", selected: true },
  { level: 2, label: "标高 2", line: "end" },
  { level: 1, label: "天花板平面", toggle: "plus" },
  { level: 1, label: "三维视图", toggle: "plus" },
  { level: 1, label: "立面 (建筑立面)", toggle: "plus" },
  { level: 1, label: "面积平面 (人防分区面积)", toggle: "plus" },
  { level: 1, label: "面积平面 (净面积)", toggle: "plus" },
  { level: 1, label: "面积平面 (总建筑面积)", toggle: "plus" },
  { level: 1, label: "面积平面 (防火分区面积)", toggle: "plus", line: "end" },
  { level: 0, label: "图例", icon: "legend" },
  { level: 0, label: "明细表/数量", icon: "schedule", toggle: "plus" },
  { level: 0, label: "图纸 (全部)", icon: "sheet" },
  { level: 0, label: "族", icon: "family", toggle: "plus" },
  { level: 0, label: "组", icon: "group", toggle: "plus" },
  { level: 0, label: "Revit 链接", icon: "link", line: "end" },
];

const ProjectBrowser = () => (
  <Panel>
    <PanelTitle $inset={4}>项目浏览器 - 项目2</PanelTitle>
    <Tree>
      {tree.map((node) => (
        <TreeRow key={node.label}>
          {Array.from({ length: node.level }, (_, i) => <Guide key={i} />)}
          <Guide $wide={node.level > 0} $branch $line={node.line}>
            {node.toggle && (
              <Toggle type="button" aria-label={node.toggle === "plus" ? "展开" : "折叠"}>
                <svg width="9" height="9" viewBox="0 0 9 9" fill="none" stroke="#8b8d91">
                  <path d="M0.500 0.500h8v8h-8Z" />
                  <path d={node.toggle === "plus" ? "M2 4.500h5M4.500 2v5" : "M2 4.500h5"} stroke="#3450a8" />
                </svg>
              </Toggle>
            )}
          </Guide>
          {node.icon && <SmallIcon name={node.icon} />}
          <TreeLabel $selected={node.selected} $iconic={!!node.icon}>{node.label}</TreeLabel>
        </TreeRow>
      ))}
    </Tree>
  </Panel>
);

export default function App() {
  return (
    <Shell>
      <GlobalStyle />
      <Defs />
      <TabBar>
        {tabs.map((name, i) => <Tab type="button" key={name} $file={i === 0} $active={i === 1}>{name}</Tab>)}
        <Tab type="button" aria-label="显示选项">
          <svg width="28" height="16" viewBox="0 0 28 16" fill="#fff" stroke="#333"><rect x="1" y="1" width="14" height="11" rx="3" /><path d="M8 5v4M6 7l2-2" /><path d="m20 8 6 0-3 4Z" fill="#222" stroke="none" /></svg>
        </Tab>
      </TabBar>
      <Ribbon>
        {groups.map((group) => (
          <RibbonGroup key={group.title} $width={group.width}>
            <GroupTools>
              {group.tools.map((tool) => <RibbonTool key={tool.icon} tool={tool} />)}
              {group.small && (
                <SmallColumn $center={group.center}>
                  {group.small.map((item) => (
                    <SmallTool type="button" key={item.icon} disabled={item.disabled}>
                      <SmallIcon name={item.icon} />{item.label}{item.menu && <Caret />}
                    </SmallTool>
                  ))}
                </SmallColumn>
              )}
            </GroupTools>
            <GroupTitle>{group.title}{group.caret && <Caret $big />}</GroupTitle>
          </RibbonGroup>
        ))}
      </Ribbon>
      <Workspace>
        <PropertiesPanel />
        <DrawingView />
        <ProjectBrowser />
      </Workspace>
      <StatusBar>
        <StatusText>单击可进行选择; 按 Tab 键并单击可选择其他项目; 按 Ctrl 键并单击可将</StatusText>
        <SmallIcon name="statusfilter" />
        <StatusField aria-label="工作集" />
        <StatusIcons>
          <SmallIcon name="statusdoc" />
          <span>:0</span>
          <SmallIcon name="statuswin" />
          <SmallIcon name="statusgray" />
        </StatusIcons>
        <StatusSelect aria-label="设计选项"><option>主模型</option></StatusSelect>
        <Grow />
        <StatusIcons>
          {["sellink", "selunder", "selpin", "selunder", "drag", "gear", "funnel"].map((name, i) => <SmallIcon key={i} name={name} />)}
        </StatusIcons>
      </StatusBar>
    </Shell>
  );
}
